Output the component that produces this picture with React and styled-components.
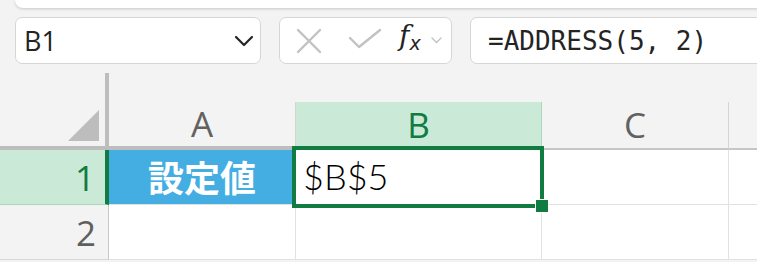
import React from 'react'
import styled, { createGlobalStyle } from 'styled-components';

const GlobalStyle = createGlobalStyle`
    html, body {
        margin: 0;
        padding: 0;
        background: #f3f3f3;
        overflow: hidden;
    }
    * { box-sizing: border-box; }
`;

const GREEN = '#107c41';

function App() {
    return (
        <>
        <GlobalStyle />
        <Page>
            <TopPanel />
            <Toolbar>
                <NameBox>
                    <span>B1</span>
                    <svg width="20" height="12" viewBox="0 0 20 12">
                        <path d="M2 2 L10 10 L18 2" fill="none" stroke="#242424" strokeWidth="2.2" strokeLinecap="round" strokeLinejoin="round" />
                    </svg>
                </NameBox>
                <FxButtons>
                    <svg width="26" height="26" viewBox="0 0 26 26">
                        <path d="M2 2 L24 24 M24 2 L2 24" stroke="#c2c2c2" strokeWidth="2.4" strokeLinecap="round" />
                    </svg>
                    <svg width="34" height="22" viewBox="0 0 34 22">
                        <path d="M2 10 L11 19 L32 2" fill="none" stroke="#c2c2c2" strokeWidth="2.4" strokeLinecap="round" strokeLinejoin="round" />
                    </svg>
                    <FxLabel>f<sub>x</sub></FxLabel>
                    <svg width="11" height="7" viewBox="0 0 11 7">
                        <path d="M1 1 L5.5 5.5 L10 1" fill="none" stroke="#c2c2c2" strokeWidth="1.4" strokeLinecap="round" />
                    </svg>
                </FxButtons>
                <FormulaBar>=ADDRESS(5, 2)</FormulaBar>
            </Toolbar>

            <Sheet>
                <Corner>
                    <svg width="31" height="31" viewBox="0 0 31 31">
                        <path d="M31 0 L31 31 L0 31 Z" fill="#bdbdbd" />
                    </svg>
                </Corner>
                <ColHeader $bottom="4px solid #bdbdbd">A</ColHeader>
                <ColHeader $active>B</ColHeader>
                <ColHeader>C</ColHeader>
                <ColHeader />

                <RowHeader $active>1</RowHeader>
                <Cell $fill="#44ade2">
                    <LabelText>設定値</LabelText>
                </Cell>
                <Cell><ValueText>$B$5</ValueText></Cell>
                <Cell />
                <Cell />

                <RowHeader>2</RowHeader>
                <Cell />
                <Cell />
                <Cell />
                <Cell />

                <Selection />
                <FillHandle />
            </Sheet>
        </Page>
        </>
    )
}

const Page = styled.div`
    width: 757px;
    height: 262px;
    overflow: hidden;
    display: flex;
    flex-direction: column;
    font-family: "Open Sans", "Noto Sans", sans-serif;
`;

const TopPanel = styled.div`
    height: 8px;
    margin-left: 15px;
    margin-right: -20px;
    background: #fff;
    border-radius: 0 0 10px 10px;
    box-shadow: 0 1px 3px rgba(0, 0, 0, 0.18);
`;

const Toolbar = styled.div`
    display: flex;
    gap: 18px;
    height: 47px;
    margin-top: 9px;
    padding-left: 15px;
`;

const Box = styled.div`
    background: #fff;
    border: 1px solid #d6d6d6;
    border-radius: 7px;
    display: flex;
    align-items: center;
`;

const NameBox = styled(Box)`
    width: 246px;
    flex: none;
    justify-content: space-between;
    padding: 0 6px 0 8px;
    font-size: 27px;
    color: #242424;
    span { margin-top: -1px; }
`;

const FxButtons = styled(Box)`
    width: 173px;
    flex: none;
    padding: 0 8px 0 16px;
    svg:nth-child(1) { margin-right: 26px; }
    svg:nth-child(2) { margin-right: 17px; margin-top: -3px; }
`;

const FxLabel = styled.span`
    font-family: "DejaVu Serif", "Liberation Serif", serif;
    font-style: italic;
    color: #242424;
    font-size: 28px;
    line-height: 1;
    margin-right: 10px;
    margin-top: -6px;
    white-space: nowrap;
    sub {
        font-family: "DejaVu Sans", sans-serif;
        font-size: 19px;
        vertical-align: -5px;
    }
`;

const FormulaBar = styled(Box)`
    flex: none;
    width: 320px;
    padding-left: 17px;
    font-family: "DejaVu Sans Mono", "Liberation Mono", monospace;
    font-size: 26px;
    color: #242424;
`;

const Sheet = styled.div`
    position: relative;
    margin-top: 9px;
    display: grid;
    grid-template-columns: 109px 187px 246px 187px 60px;
    grid-template-rows: 77px 55px 55px;
`;

const Corner = styled.div`
    border-right: 4px solid #bdbdbd;
    border-bottom: 4px solid #bdbdbd;
    display: flex;
    justify-content: flex-end;
    align-items: flex-end;
    padding: 0 6px 5px 0;
`;

const ColHeader = styled.div`
    align-self: end;
    height: 48px;
    display: flex;
    align-items: center;
    justify-content: center;
    padding-bottom: 2px;
    font-size: 35px;
    background: ${p => p.$active ? '#cae9d7' : 'transparent'};
    color: ${p => p.$active ? GREEN : '#616161'};
    border-right: 1px solid ${p => p.$active ? '#a9d8bd' : '#d4d4d4'};
    border-bottom: ${p => p.$bottom || '2px solid #c6c6c6'};
`;

const RowHeader = styled.div`
    display: flex;
    align-items: center;
    justify-content: flex-end;
    padding-right: ${p => p.$active ? '10px' : '12px'};
    font-size: 35px;
    background: ${p => p.$active ? '#cae9d7' : 'transparent'};
    color: ${p => p.$active ? GREEN : '#5f5f5f'};
    border-right: ${p => p.$active ? `4px solid ${GREEN}` : '1px solid #c8c8c8'};
    border-bottom: 1px solid ${p => p.$active ? '#a9d8bd' : '#d8d8d8'};
`;

const Cell = styled.div`
    background: ${p => p.$fill || '#fff'};
    border-right: 1px solid #e1e1e1;
    border-bottom: 1px solid #e1e1e1;
    display: flex;
    align-items: center;
    justify-content: ${p => p.$fill ? 'center' : 'flex-start'};
    padding-left: ${p => p.$fill ? '0' : '7px'};
    overflow: hidden;
`;

const LabelText = styled.span`
    font-family: "Noto Sans CJK JP", sans-serif;
    font-weight: 700;
    font-size: 36px;
    color: #fff;
    margin-top: -2px;
`;

const ValueText = styled.span`
    font-family: Lato, "Noto Sans", sans-serif;
    font-weight: 300;
    font-size: 36px;
    color: #000;
    margin-top: -3px;
`;

const Selection = styled.div`
    position: absolute;
    left: 292px;
    top: 73px;
    width: 252px;
    height: 62px;
    border: 4px solid ${GREEN};
    pointer-events: none;
`;

const FillHandle = styled.div`
    position: absolute;
    left: 536px;
    top: 127px;
    width: 12px;
    height: 12px;
    background: ${GREEN};
    outline: 1px solid #fff;
`;

export default App;
